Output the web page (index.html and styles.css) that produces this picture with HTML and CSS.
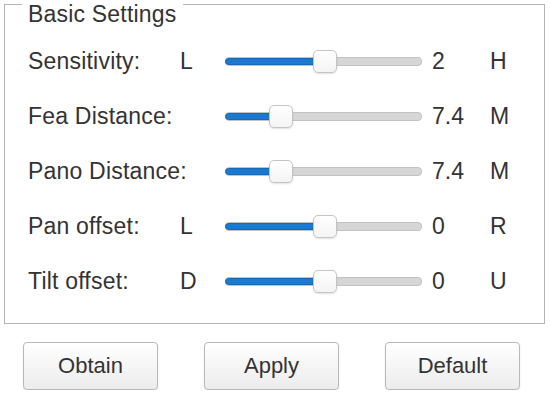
FILE: index.html
```html
<!DOCTYPE html>
<html lang="en">
<head>
  <meta charset="UTF-8" />
  <title>Basic Settings</title>
  <link rel="stylesheet" href="styles.css">
</head>
<body>
<fieldset class="panel">
  <legend>Basic Settings</legend>

  <div class="row">
    <span class="label">Sensitivity:</span>
    <span class="min">L</span>
    <div class="slider"><div class="fill" style="width:100px"></div><div class="thumb" style="left:88px"></div></div>
    <span class="value">2</span>
    <span class="max">H</span>
  </div>

  <div class="row">
    <span class="label">Fea Distance:</span>
    <span class="min"></span>
    <div class="slider"><div class="fill" style="width:56px"></div><div class="thumb" style="left:44px"></div></div>
    <span class="value">7.4</span>
    <span class="max">M</span>
  </div>

  <div class="row">
    <span class="label">Pano Distance:</span>
    <span class="min"></span>
    <div class="slider"><div class="fill" style="width:56px"></div><div class="thumb" style="left:44px"></div></div>
    <span class="value">7.4</span>
    <span class="max">M</span>
  </div>

  <div class="row">
    <span class="label">Pan offset:</span>
    <span class="min">L</span>
    <div class="slider"><div class="fill" style="width:100px"></div><div class="thumb" style="left:88px"></div></div>
    <span class="value">0</span>
    <span class="max">R</span>
  </div>

  <div class="row">
    <span class="label">Tilt offset:</span>
    <span class="min">D</span>
    <div class="slider"><div class="fill" style="width:100px"></div><div class="thumb" style="left:88px"></div></div>
    <span class="value">0</span>
    <span class="max">U</span>
  </div>
</fieldset>

<div class="button-group">
  <button>Obtain</button>
  <button>Apply</button>
  <button>Default</button>
</div>
</body>
</html>
```

FILE: styles.css
```css
* { box-sizing: border-box; }
body {
  margin: 0;
  font-family: "Liberation Sans", Arial, sans-serif;
  font-size: 23px;
  color: #333;
  background: #fff;
  overflow: hidden;
}
.panel {
  margin: -19px 5px 0 4px;
  padding: 7px 0 14px 23px;
  border: 1px solid #b4b4b4;
}
.panel legend {
  margin-left: -6px;
  padding: 20px 6px 0;
  line-height: 26px;
  letter-spacing: 0.2px;
}
.row {
  display: grid;
  grid-template-columns: 152px 45px 197px 68px 1fr;
  align-items: center;
  height: 55px;
}
.label {
  white-space: nowrap;
  letter-spacing: 0.2px;
}
.value { padding-left: 10px; }
.slider {
  position: relative;
  height: 24px;
  display: flex;
  align-items: center;
}
.slider::before {
  content: "";
  display: block;
  width: 100%;
  height: 7px;
  border-radius: 4px;
  background: #d6d6d6;
  border: 1px solid #c2c2c2;
}
.fill {
  position: absolute;
  left: 0;
  top: 8px;
  height: 7px;
  border-radius: 4px;
  background: #1c79d0;
  border: 1px solid #1668b8;
}
.thumb {
  position: absolute;
  top: 0;
  width: 24px;
  height: 23px;
  background: linear-gradient(#ffffff, #f4f4f4);
  border: 1px solid #c4c4c4;
  border-radius: 5px;
  box-shadow: 0 1px 2px rgba(0,0,0,0.12);
}
.button-group {
  display: flex;
  gap: 46px;
  padding-left: 23px;
  margin-top: 18px;
}
button {
  width: 135px;
  height: 48px;
  font-family: "Liberation Sans", Arial, sans-serif;
  font-size: 22px;
  color: #333;
  background: linear-gradient(#ffffff, #ececec);
  border: 1px solid #b8b8b8;
  border-radius: 4px;
  box-shadow: 0 1px 2px rgba(0,0,0,0.1);
}
```
